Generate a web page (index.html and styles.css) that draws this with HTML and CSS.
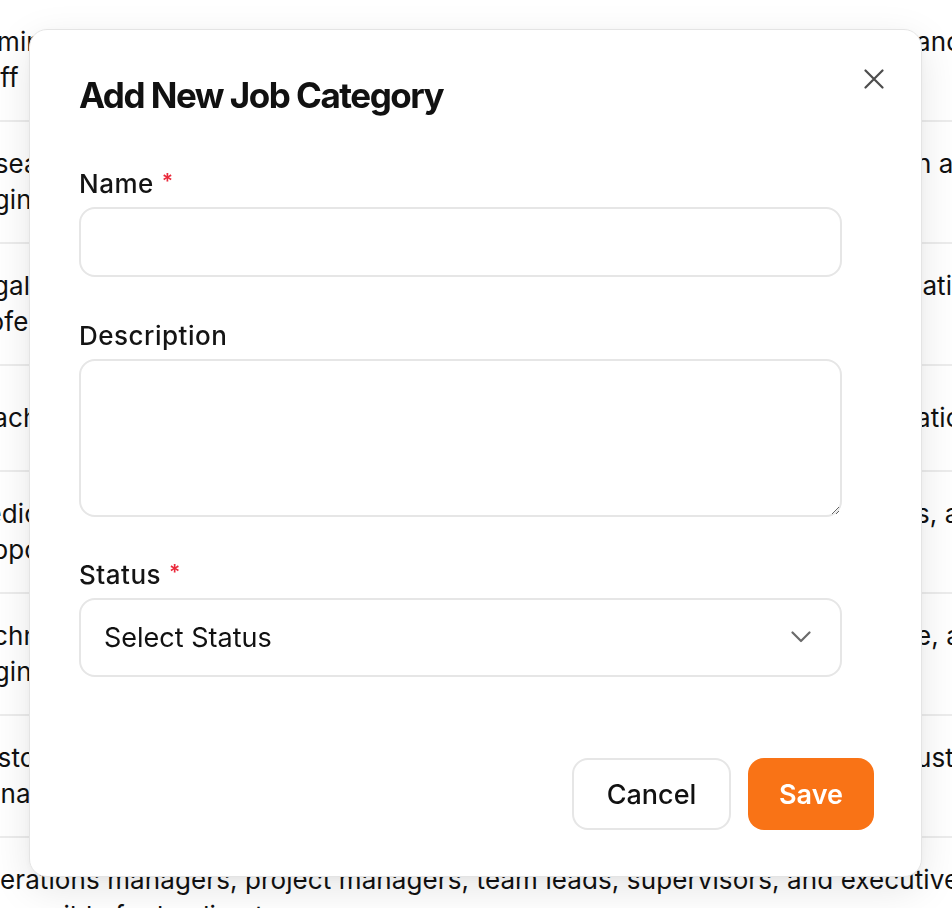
FILE: index.html
```html
<!DOCTYPE html>
<html lang="en">
<head>
<meta charset="utf-8">
<title>Add New Job Category</title>
<link rel="stylesheet" href="styles.css">
</head>
<body>
<div class="table">
  <div class="row">
    <div class="line"><span class="l">Administrative and office support staff</span><span class="r">ance</span></div>
    <div class="line"><span class="l">staff</span><span class="r"></span></div>
  </div>
  <div class="row">
    <div class="line"><span class="l">Research scientists and analysts</span><span class="r">n and</span></div>
    <div class="line"><span class="l">engineers</span><span class="r"></span></div>
  </div>
  <div class="row">
    <div class="line"><span class="l">Legal advisors and counsel</span><span class="r">lation</span></div>
    <div class="line"><span class="l">professionals</span><span class="r"></span></div>
  </div>
  <div class="row tall">
    <div class="line"><span class="l">Teaching staff and trainers</span><span class="r">ation</span></div>
  </div>
  <div class="row">
    <div class="line"><span class="l">Medical staff and caregivers</span><span class="r">s, and</span></div>
    <div class="line"><span class="l">support</span><span class="r"></span></div>
  </div>
  <div class="row">
    <div class="line"><span class="l">Technicians and mechanics</span><span class="r">e, and</span></div>
    <div class="line"><span class="l">engineers</span><span class="r"></span></div>
  </div>
  <div class="row">
    <div class="line"><span class="l">Customer service representatives</span><span class="r">ustomer</span></div>
    <div class="line"><span class="l">management</span><span class="r"></span></div>
  </div>
  <div class="row">
    <div class="line full">Operations managers, project managers, team leads, supervisors, and executives</div>
    <div class="line full">responsible for leading teams</div>
  </div>
</div>

<div class="overlay">
  <div class="modal" role="dialog" aria-labelledby="modal-title">
    <button class="close" type="button" aria-label="Close">
      <svg width="20" height="20" viewBox="0 0 20 20" aria-hidden="true">
        <path d="M1.5 1.5 L18.5 18.5 M18.5 1.5 L1.5 18.5" stroke="#4d4d4d" stroke-width="2.2" stroke-linecap="round" fill="none"/>
      </svg>
    </button>
    <h2 class="title" id="modal-title">Add New Job Category</h2>
    <form class="form">
      <label class="label" for="name">Name<span class="req">*</span></label>
      <input class="input" id="name" type="text">

      <label class="label" for="desc">Description</label>
      <textarea class="textarea" id="desc"></textarea>

      <label class="label" for="status">Status<span class="req">*</span></label>
      <div class="select-wrap">
        <select class="select" id="status">
          <option>Select Status</option>
          <option>Active</option>
          <option>Inactive</option>
        </select>
        <svg class="chevron" width="20" height="12" viewBox="0 0 20 12" aria-hidden="true">
          <path d="M1.5 1.5 L10 10 L18.5 1.5" stroke="#6b6b6b" stroke-width="2.2" stroke-linecap="round" stroke-linejoin="round" fill="none"/>
        </svg>
      </div>
    </form>
    <div class="actions">
      <button class="btn btn-cancel" type="button">Cancel</button>
      <button class="btn btn-save" type="button">Save</button>
    </div>
  </div>
</div>
</body>
</html>
```

FILE: styles.css
```css
* { box-sizing: border-box; }

html, body {
  margin: 0;
  padding: 0;
  background: #ffffff;
  overflow: hidden;
}

body {
  font-family: Inter, "Noto Sans", "Liberation Sans", sans-serif;
  color: #111111;
  width: 952px;
  height: 908px;
}

/* background table */
.table {
  width: 952px;
}

.row {
  padding: 24px 0;
  border-bottom: 2px solid #ececec;
}

.row.tall {
  padding: 34px 0;
}

.line {
  display: grid;
  grid-template-columns: 916px 1fr;
  height: 36px;
  line-height: 36px;
  font-size: 26px;
  letter-spacing: 0.1px;
  white-space: nowrap;
  overflow: hidden;
}

.line .l {
  overflow: hidden;
  text-indent: -37px;
}

.line .r {
  overflow: hidden;
}

.line.full {
  display: block;
  text-indent: -36px;
}

/* modal */
.overlay {
  position: fixed;
  inset: 0;
  padding: 29px 30px 0 29px;
}

.modal {
  position: relative;
  width: 893px;
  background: #ffffff;
  border: 1px solid #e4e4e4;
  border-radius: 18px;
  padding: 43px 47px 46px 49px;
  box-shadow: 0 12px 40px rgba(0, 0, 0, 0.10), 0 2px 8px rgba(0, 0, 0, 0.04);
}

.close {
  position: absolute;
  top: 39px;
  right: 37px;
  width: 20px;
  height: 20px;
  padding: 0;
  border: 0;
  background: transparent;
  display: flex;
  cursor: pointer;
}

.title {
  margin: 0 0 51px 0;
  font-size: 35px;
  line-height: 44px;
  font-weight: 700;
  letter-spacing: -1.5px;
  color: #111111;
}

.form {
  display: flex;
  flex-direction: column;
  padding-right: 32px;
}

.label {
  display: block;
  height: 32px;
  font-size: 26px;
  line-height: 32px;
  font-weight: 500;
  letter-spacing: 0.5px;
  color: #141414;
  margin-bottom: 7px;
}

.req {
  position: relative;
  top: -4px;
  color: #ea2a3c;
  font-size: 21px;
  font-weight: 600;
  margin-left: 8px;
}

.input,
.textarea,
.select {
  display: block;
  width: 100%;
  border: 2px solid #e6e6e6;
  border-radius: 16px;
  background: #ffffff;
  font-family: inherit;
  color: #111111;
  outline: none;
}

.input {
  height: 70px;
  margin-bottom: 43px;
  padding: 0 24px;
  font-size: 27px;
}

.textarea {
  height: 158px;
  margin-bottom: 42px;
  padding: 18px 24px;
  font-size: 27px;
  resize: vertical;
}

.select-wrap {
  position: relative;
}

.select {
  height: 79px;
  padding: 0 23px;
  font-size: 27px;
  letter-spacing: 0;
  appearance: none;
  -webkit-appearance: none;
}

.chevron {
  position: absolute;
  right: 31px;
  top: 33px;
  pointer-events: none;
}

.actions {
  display: flex;
  justify-content: flex-end;
  gap: 17px;
  margin-top: 81px;
}

.btn {
  height: 72px;
  border-radius: 16px;
  font-family: inherit;
  font-size: 27px;
  font-weight: 500;
  letter-spacing: 0;
  cursor: pointer;
}

.btn-cancel {
  width: 159px;
  background: #ffffff;
  border: 2px solid #e6e6e6;
  color: #111111;
}

.btn-save {
  width: 126px;
  background: #f97316;
  border: 0;
  color: #ffffff;
  font-weight: 600;
}
```
